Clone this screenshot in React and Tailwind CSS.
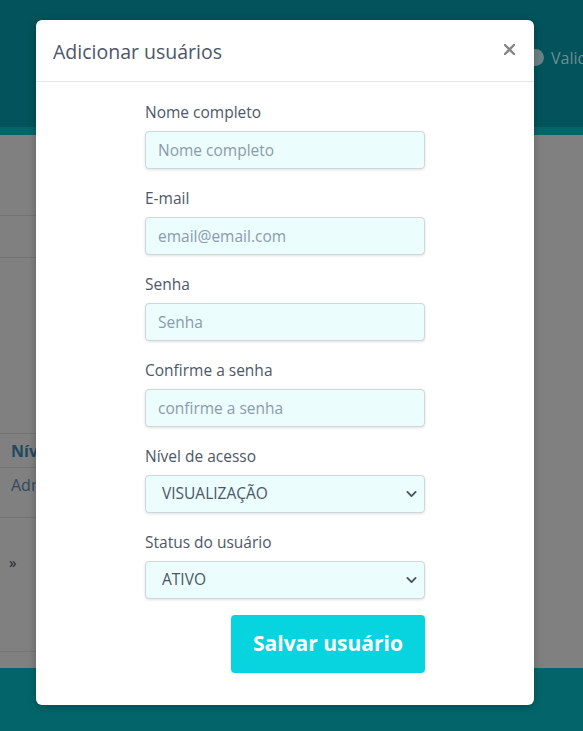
import { useState } from "react";

const fields = [
  { label: "Nome completo", placeholder: "Nome completo", type: "text" },
  { label: "E-mail", placeholder: "email@email.com", type: "email" },
  { label: "Senha", placeholder: "Senha", type: "password" },
  { label: "Confirme a senha", placeholder: "confirme a senha", type: "password" },
];

const Chevron = () => (
  <svg
    width="11"
    height="11"
    viewBox="0 0 16 16"
    className="pointer-events-none absolute right-[8px] top-1/2 -translate-y-1/2"
  >
    <path
      d="M2 5l6 6 6-6"
      fill="none"
      stroke="#4a5568"
      strokeWidth="2.8"
      strokeLinecap="round"
      strokeLinejoin="round"
    />
  </svg>
);

const SelectField = ({ label, value, options, onChange }) => (
  <div className="mb-4">
    <label className="mb-2 block h-6 pt-[1px] leading-6 text-[15.5px] text-[#4d5768]">
      {label}
    </label>
    <div className="relative">
      <select
        value={value}
        onChange={(e) => onChange(e.target.value)}
        className="h-[38px] w-full appearance-none rounded border border-[#cfd6dc] bg-[#ebfdfd] pl-4 pr-8 text-[15.5px] text-[#4a5568] shadow-[0_1px_3px_rgba(0,0,0,0.12)] outline-none"
      >
        {options.map((o) => (
          <option key={o}>{o}</option>
        ))}
      </select>
      <Chevron />
    </div>
  </div>
);

const App = () => {
  const [nivel, setNivel] = useState("VISUALIZAÇÃO");
  const [status, setStatus] = useState("ATIVO");

  return (
    <div
      className="relative min-h-[731px] overflow-hidden bg-[#808080]"
      style={{ fontFamily: '"Open Sans", "Noto Sans", sans-serif' }}
    >
      {/* background page (dimmed) */}
      <div className="flex h-[127px] items-center bg-[#02535b]">
        <div className="ml-[527px] mt-[-12px] flex shrink-0 items-center gap-[7px] whitespace-nowrap">
          <span className="h-[17px] w-[17px] rounded-full bg-[#6a8385]" />
          <span className="text-[16px] text-[#6e8e91]">Validação</span>
        </div>
      </div>
      <div className="h-[8px] bg-[#046569]" />
      <div className="h-[533px] bg-[#808080]">
        <div className="h-[80px]" />
        <div className="w-[320px] border-t border-[#737373]" />
        <div className="h-[41px]" />
        <div className="w-[320px] border-t border-[#737373]" />
        <div className="h-[175px]" />
        <div className="w-[320px] border-t border-[#737373]" />
        <div className="flex h-[33px] items-center pl-[11px] text-[16px] font-bold text-[#1f4a5f]">
          Nível
        </div>
        <div className="w-[320px] border-t border-[#737373]" />
        <div className="flex h-[34px] items-center pl-[11px] text-[16px] text-[#34485c]">
          Administrador
        </div>
        <div className="h-[15px]" />
        <div className="w-[320px] border-t border-[#737373]" />
        <div className="flex h-[88px] items-center pl-[9px] text-[15px] text-[#222]">
          »
        </div>
        <div className="h-[45px]" />
        <div className="w-[320px] border-t border-[#767676]" />
      </div>
      <div className="h-[63px] bg-[#03656a]" />

      {/* modal */}
      <div className="absolute left-[36px] top-[20px] w-[498px] rounded-md bg-white shadow-[0_2px_8px_rgba(0,0,0,0.25)]">
        <div className="flex h-[62px] items-center justify-between border-b border-[#e5e7eb] pl-[17px] pr-[19px]">
          <h2 className="pt-[2px] text-[19.5px] text-[#4d5568]">Adicionar usuários</h2>
          <button type="button" aria-label="Fechar" className="mt-[-2px]">
            <svg width="11" height="11" viewBox="0 0 11 11">
              <path
                d="M1 1l9 9M10 1l-9 9"
                stroke="#858585"
                strokeWidth="2.4"
                strokeLinecap="round"
              />
            </svg>
          </button>
        </div>
        <form className="mx-auto w-[280px] pb-8 pt-[17px]">
          {fields.map((f) => (
            <div key={f.label} className="mb-4">
              <label className="mb-2 block h-6 pt-[1px] leading-6 text-[15.5px] text-[#4d5768]">
                {f.label}
              </label>
              <input
                type={f.type}
                placeholder={f.placeholder}
                className="h-[38px] w-full rounded border border-[#cfd6dc] bg-[#ebfdfd] px-[12px] text-[15.5px] text-[#4a5568] shadow-[0_1px_3px_rgba(0,0,0,0.12)] outline-none placeholder:text-[#8c9aab]"
              />
            </div>
          ))}
          <SelectField
            label="Nível de acesso"
            value={nivel}
            onChange={setNivel}
            options={["VISUALIZAÇÃO", "ADMINISTRADOR"]}
          />
          <SelectField
            label="Status do usuário"
            value={status}
            onChange={setStatus}
            options={["ATIVO", "INATIVO"]}
          />
          <div className="flex justify-end">
            <button
              type="button"
              className="h-[58px] w-[194px] rounded bg-[#07d4de] text-[21px] font-bold text-white"
            >
              Salvar usuário
            </button>
          </div>
        </form>
      </div>
    </div>
  );
};

export default App;
